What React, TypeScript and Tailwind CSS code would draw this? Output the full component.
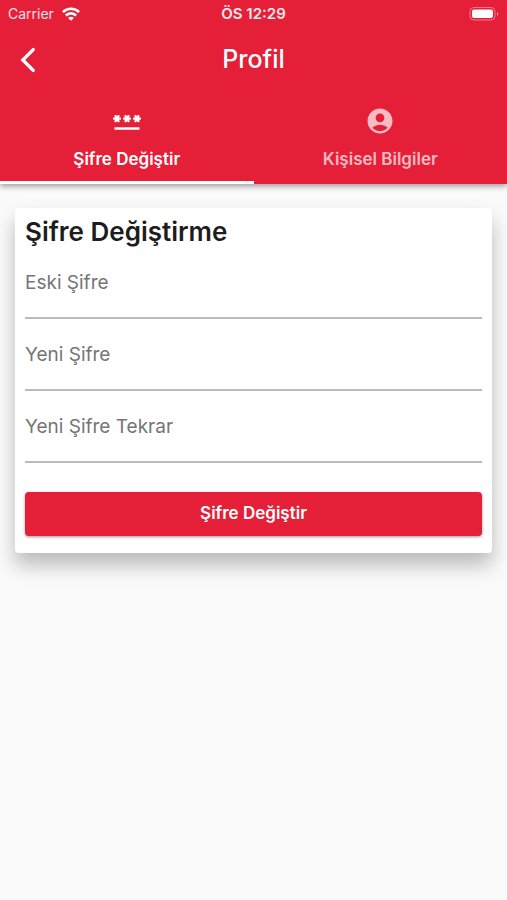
import { FC, useState } from 'react';
import clsx from 'clsx';
import { MdAccountCircle } from 'react-icons/md';

const BackIcon = () => (
  <svg viewBox="0 0 16 26" className="h-[26px] w-4" fill="none" stroke="currentColor" strokeWidth="3.4" strokeLinecap="round">
    <path d="M13.2 2.6 2.8 13l10.4 10.4" />
  </svg>
);

const WifiIcon = () => (
  <svg viewBox="0 0 18 14" className="h-[14px] w-[18px] text-white" fill="none" stroke="currentColor" strokeWidth="2.6">
    <path d="M.9 5.2a11.4 11.4 0 0 1 16.2 0" />
    <path d="M3.9 8.5a7.1 7.1 0 0 1 10.2 0" />
    <path d="M9 13.8 6.1 10.9a4 4 0 0 1 5.8 0z" fill="currentColor" stroke="none" />
  </svg>
);

const BatteryIcon = () => (
  <svg viewBox="0 0 31 14" className="h-[14px] w-[31px]" fill="none">
    <rect x="2" y="0.5" width="25" height="12.5" rx="4" stroke="currentColor" strokeOpacity="0.4" />
    <rect x="4" y="2.5" width="21" height="8.5" rx="2" fill="currentColor" />
    <path d="M29 5v4c1.8-.7 1.8-3.3 0-4z" fill="currentColor" fillOpacity="0.5" />
  </svg>
);

const PasswordIcon: FC<{ className?: string }> = ({ className }) => (
  <svg viewBox="0 0 24 24" className={className} fill="none" stroke="currentColor" strokeWidth="1.8">
    <path d="M2 18h20" strokeWidth="2" />
    <path d="M.9 10.1h6.2M2.45 7.4l3.1 5.4M5.55 7.4l-3.1 5.4" />
    <path d="M8.9 10.1h6.2M10.45 7.4l3.1 5.4M13.55 7.4l-3.1 5.4" />
    <path d="M16.9 10.1h6.2M18.45 7.4l3.1 5.4M21.55 7.4l-3.1 5.4" />
  </svg>
);

const StatusBar = () => (
  <div className="grid h-7 grid-cols-3 items-center px-2 text-sm">
    <div className="flex items-center gap-x-2 text-white/85">
      <span>Carrier</span>
      <WifiIcon />
    </div>
    <span className="text-center text-[15px] font-semibold text-white/90">ÖS 12:29</span>
    <div className="flex justify-end">
      <BatteryIcon />
    </div>
  </div>
);

interface TabProps {
  label: string;
  icon: FC<{ className?: string }>;
  active: boolean;
  onClick: () => void;
}

const Tab: FC<TabProps> = ({ label, icon: Icon, active, onClick }) => (
  <button
    type="button"
    role="tab"
    aria-selected={active}
    onClick={onClick}
    className={clsx(
      'flex flex-1 flex-col items-center gap-y-[11px] border-b-[3px] pt-3.5 pb-2.5',
      active ? 'border-white text-white' : 'border-transparent text-white/70'
    )}
  >
    <Icon className="size-[30px]" />
    <span className="text-[17px] leading-6 font-semibold">{label}</span>
  </button>
);

interface PasswordFieldProps {
  id: string;
  label: string;
}

const PasswordField: FC<PasswordFieldProps> = ({ id, label }) => {
  const [value, setValue] = useState('');

  return (
    <div className="relative h-[72px]">
      <input
        id={id}
        type="password"
        value={value}
        onChange={(e) => setValue(e.target.value)}
        className="h-full w-full border-b-2 border-[#bbbbbb] pt-4 text-xl outline-none focus:border-[#e51f38]"
      />
      <label
        htmlFor={id}
        className={clsx(
          'pointer-events-none absolute left-0 text-[#757575]',
          value ? 'top-1 text-sm' : 'top-6 text-[19px] leading-6'
        )}
      >
        {label}
      </label>
    </div>
  );
};

const fields = [
  { id: 'old-password', label: 'Eski Şifre' },
  { id: 'new-password', label: 'Yeni Şifre' },
  { id: 'new-password-repeat', label: 'Yeni Şifre Tekrar' },
];

export default function App() {
  const [tab, setTab] = useState('password');

  return (
    <div className="min-h-screen bg-[#fafafa] font-['Inter',sans-serif] text-[#1d1d1d]">
      <header className="relative bg-[#e51f38] text-white shadow-[0_2px_6px_rgba(0,0,0,0.4)]">
        <StatusBar />
        <div className="grid h-16 grid-cols-[56px_1fr_56px] items-center">
          <button type="button" aria-label="Geri" className="flex h-full items-center justify-center">
            <BackIcon />
          </button>
          <h1 className="text-center text-[25px] font-medium">Profil</h1>
        </div>
        <div role="tablist" className="flex">
          <Tab
            label="Şifre Değiştir"
            icon={PasswordIcon}
            active={tab === 'password'}
            onClick={() => setTab('password')}
          />
          <Tab
            label="Kişisel Bilgiler"
            icon={MdAccountCircle}
            active={tab === 'info'}
            onClick={() => setTab('info')}
          />
        </div>
      </header>

      <main className="px-[15px] pt-6">
        <form
          onSubmit={(e) => e.preventDefault()}
          className="rounded bg-white px-2.5 pt-[9px] pb-[17px] shadow-[0_12px_20px_rgba(0,0,0,0.26)]"
        >
          <h2 className="text-[26px] leading-[30px] font-semibold">Şifre Değiştirme</h2>
          {fields.map((field) => (
            <PasswordField key={field.id} id={field.id} label={field.label} />
          ))}
          <button
            type="submit"
            className="mt-[29px] h-11 w-full rounded bg-[#e51f38] pb-0.5 text-[17px] leading-6 font-semibold text-white shadow-[0_1px_3px_rgba(0,0,0,0.4)]"
          >
            Şifre Değiştir
          </button>
        </form>
      </main>
    </div>
  );
}
